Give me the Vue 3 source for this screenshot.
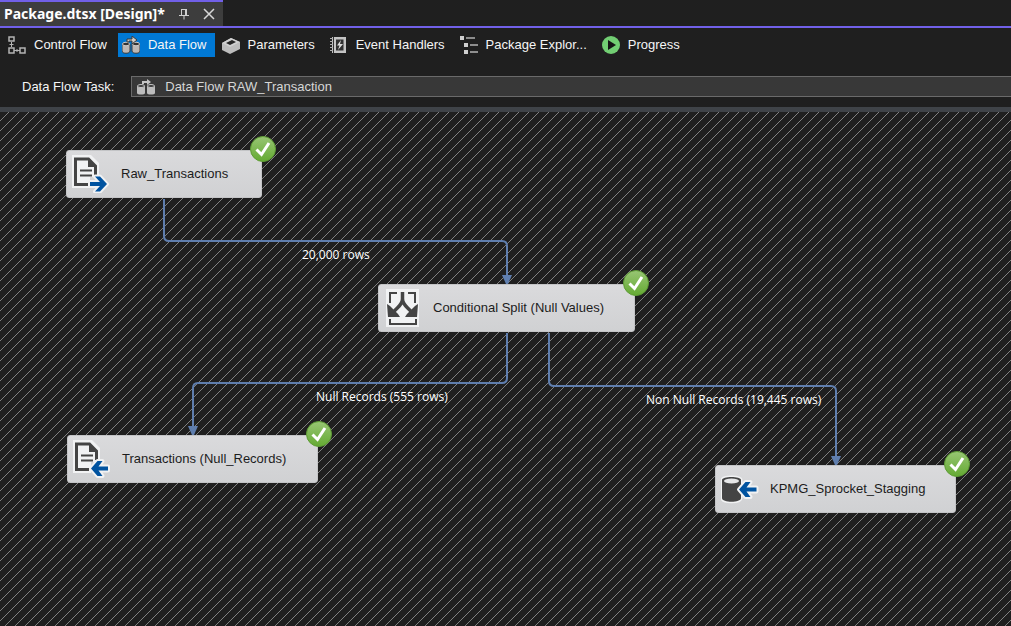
<script setup>
const views = [
  { id: 'control', label: 'Control Flow' },
  { id: 'data', label: 'Data Flow' },
  { id: 'params', label: 'Parameters' },
  { id: 'events', label: 'Event Handlers' },
  { id: 'explorer', label: 'Package Explor...' },
  { id: 'progress', label: 'Progress' },
]
const active = 'data'

const nodes = [
  { id: 'raw', label: 'Raw_Transactions', kind: 'source', x: 66, y: 38, w: 196 },
  { id: 'split', label: 'Conditional Split (Null Values)', kind: 'split', x: 378, y: 172, w: 257 },
  { id: 'nulls', label: 'Transactions (Null_Records)', kind: 'target', x: 67, y: 323, w: 251 },
  { id: 'stage', label: 'KPMG_Sprocket_Stagging', kind: 'database', x: 715, y: 353, w: 241 },
]

const edges = [
  { d: 'M164 87V124Q164 129 169 129H502Q507 129 507 134V164', x: 507, y: 172 },
  { d: 'M507 221V266Q507 271 502 271H198Q193 271 193 276V315', x: 193, y: 323 },
  { d: 'M549 221V269Q549 274 554 274H831Q836 274 836 279V345', x: 836, y: 353 },
]

const counts = [
  { text: '20,000 rows', x: 302, y: 134 },
  { text: 'Null Records (555 rows)', x: 316, y: 276 },
  { text: 'Non Null Records (19,445 rows)', x: 646, y: 279 },
]

const stripe = Array.from({ length: 10 }, (_, i) => ({ x: i, y: (18 - i) % 10 }))
const place = (o) => ({ left: o.x + 'px', top: o.y + 'px', width: o.w ? o.w + 'px' : null })
</script>

<template>
  <div class="designer">
    <header class="files">
      <div class="file">
        <span class="file-name">Package.dtsx [Design]*</span>
        <button class="mini" aria-label="Pin">
          <svg width="10" height="12" viewBox="0 0 10 12" fill="none" stroke="#d0d0d0">
            <path d="M2.500 1v6M2 1.500h6M0 7.500h10M5 8v3.500" />
            <path d="M7 1v6" stroke-width="2" />
          </svg>
        </button>
        <button class="mini" aria-label="Close">
          <svg width="12" height="12" viewBox="0 0 12 12" fill="none" stroke="#d8d8d8" stroke-width="1.500">
            <path d="M1 1l10 10M11 1L1 11" />
          </svg>
        </button>
      </div>
    </header>

    <nav class="views">
      <button v-for="v in views" :key="v.id" class="view" :class="{ active: v.id === active }">
        <svg v-if="v.id === 'control'" class="icon" viewBox="0 0 18 18" fill="none" stroke="#b4b4b4">
          <rect x="1" y="1" width="5" height="4" stroke-width="1.500" />
          <rect x="1" y="12" width="5" height="5" stroke-width="1.500" />
          <rect x="12" y="12" width="5" height="5" stroke-width="1.500" />
          <path d="M3.500 6v5M1.500 8.500h4M6 14.500h6M9 13v3" />
        </svg>
        <svg v-else-if="v.id === 'data'" class="icon" viewBox="0 0 18 18">
          <path d="M0 8v7c0 3 8 3 8 0V8zM10 8v7c0 3 8 3 8 0V8z" fill="#bdb8b5" stroke="#3a3a3a" />
          <ellipse cx="4" cy="8" rx="3.500" ry="1.800" fill="#333" stroke="#d3cfcb" />
          <ellipse cx="14" cy="8" rx="3.500" ry="1.800" fill="#333" stroke="#d3cfcb" />
          <path d="M5 6V3h5V0l5 4-5 4V5H7v1z" fill="#d0cbc5" stroke="#3a3a3a" />
        </svg>
        <svg v-else-if="v.id === 'params'" class="icon" viewBox="0 0 18 18">
          <path d="M0 7l9-5 9 4v7l-10 5-8-4z" fill="#bdbdbd" />
          <path d="M0 7l9-5 9 4-10 5z" fill="#d0d0d0" />
          <path d="M4 7l6-3 4 2-6 3z" fill="#252525" />
        </svg>
        <svg v-else-if="v.id === 'events'" class="icon" viewBox="0 0 18 18">
          <rect x="2" y="1" width="14" height="16" fill="#c4c4c4" />
          <rect x="6" y="3.500" width="7.500" height="11" fill="#303030" />
          <path d="M11 4L7 9.500h2.500L8 14l5-6h-3z" fill="#ddd" />
          <path d="M0 2.500h3M0 5.500h3M0 8.500h3M0 11.500h3M0 14.500h3" stroke="#aaa" />
          <path d="M3.500 1v16" stroke="#303030" />
        </svg>
        <svg v-else-if="v.id === 'explorer'" class="icon" viewBox="0 0 18 18">
          <path d="M0 0h4v4H0zM4 7h4v4H4zM4 14h4v4H4z" fill="#cfcfcf" />
          <path d="M6 2h9" stroke="#8c8c8c" stroke-width="2" />
          <path d="M10 9h8M10 16h8" stroke="#b4b4b4" stroke-width="1.500" />
        </svg>
        <svg v-else class="icon" viewBox="0 0 18 18">
          <circle cx="9" cy="9" r="9" fill="#72ce73" />
          <path d="M6 4l8 5-8 5z" fill="#151515" />
        </svg>
        <span>{{ v.label }}</span>
      </button>
    </nav>

    <div class="task">
      <span>Data Flow Task:</span>
      <button class="picker" aria-label="Data Flow Task">
        <svg class="icon" viewBox="0 0 18 18">
          <path d="M0 8v7c0 2 8 2 8 0V8zM10 8v7c0 2 8 2 8 0V8z" fill="#bcbcbc" />
          <ellipse cx="4" cy="8" rx="3.500" ry="1.500" fill="#383838" stroke="#c8c8c8" />
          <ellipse cx="14" cy="8" rx="3.500" ry="1.500" fill="#383838" stroke="#c8c8c8" />
          <path d="M5 6V3h5V1l4 3-4 3V5H7v1z" fill="#c4c4c4" />
        </svg>
        <span>Data Flow RAW_Transaction</span>
      </button>
    </div>

    <main class="canvas">
      <svg class="lines" width="100%" height="100%">
        <defs>
          <pattern id="hatch" width="10" height="10" patternUnits="userSpaceOnUse">
            <rect v-for="s in stripe" :key="s.x" :x="s.x" :y="s.y" width="1" height="1" fill="#808080" shape-rendering="crispEdges" />
          </pattern>
        </defs>
        <rect width="100%" height="100%" fill="url(#hatch)" />
        <g v-for="e in edges" :key="e.d">
          <path :d="e.d" fill="none" stroke="#5f7eae" stroke-width="2" />
          <path :d="`M${e.x - 5} ${e.y - 9}h10l-4 9h-2z`" fill="#5f7eae" />
        </g>
      </svg>

      <span v-for="c in counts" :key="c.text" class="count" :style="place(c)">{{ c.text }}</span>

      <article v-for="n in nodes" :key="n.id" class="node" :style="place(n)">
        <svg class="glyph" width="38" height="38" viewBox="0 0 38 38">
          <g v-if="n.kind === 'source' || n.kind === 'target'">
            <path d="M0 0h19l8 8v14H18v11H0z" fill="#f1f2f3" />
            <path d="M16 29.500H3.500V4h13l7 7v9" fill="none" stroke="#444" stroke-width="3" />
            <path d="M16 3l9 9h-9z" fill="#444" />
            <path d="M8 15.500h12M8 20.500h12" stroke="#444" stroke-width="2" />
            <path
              :d="n.kind === 'source'
                ? 'M18 27h10l-5-5.500h5l7 7.500-7 7.500h-5l5-5.500H18z'
                : 'M35 26.500H25.500l4-5.500h-5L18 28.500l6.500 7.500h5l-4-5.500H35z'"
              fill="#0053a0" stroke="#f1f2f3" stroke-width="4" stroke-linejoin="round" paint-order="stroke"
            />
          </g>
          <g v-else-if="n.kind === 'split'">
            <path d="M2 0h33v38H2z" fill="#f1f2f3" />
            <path d="M13 4H6v10M24 4h7v10M6 30v5h26v-5" fill="none" stroke="#444" stroke-width="2" />
            <path d="M18.500 3v7c0 6-5 8-9 13M18.500 10c0 6 5 8 9 13" fill="none" stroke="#444" stroke-width="3.500" />
            <path d="M3 15l3 2 8 8 2 3H4zM34 15l-3 2-8 8-2 3h12z" fill="#444" />
          </g>
          <g v-else>
            <path
              d="M1 10v18c0 5 19 5 19 0V10c0-4-19-4-19 0z"
              fill="#444" stroke="#f1f2f3" stroke-width="3" paint-order="stroke"
            />
            <ellipse cx="10.500" cy="11" rx="7.500" ry="2.500" fill="#e6e7e8" />
            <path
              d="M35.500 17.500H25.500l4-5.500h-5L18 19.500l6.500 7.500h5l-4-5.500h10z"
              fill="#0053a0" stroke="#f1f2f3" stroke-width="4" stroke-linejoin="round" paint-order="stroke"
            />
          </g>
        </svg>
        <span>{{ n.label }}</span>
        <svg class="badge" width="26" height="26" viewBox="0 0 26 26" role="img" aria-label="Succeeded">
          <defs>
            <linearGradient :id="'ok-' + n.id" x1="0" y1="0" x2="0" y2="1">
              <stop offset="0" stop-color="#98c574" />
              <stop offset="1" stop-color="#64aa32" />
            </linearGradient>
          </defs>
          <circle cx="13" cy="13" r="12.500" :fill="`url(#ok-${n.id})`" stroke="#5d9b34" />
          <path d="M6.500 13.500l5 5L19 7" fill="none" stroke="#fff" stroke-width="3" />
        </svg>
      </article>
    </main>
  </div>
</template>

<style>
body {
  margin: 0;
  background: #1f1f1f;
}
</style>

<style scoped>
.designer {
  display: flex;
  flex-direction: column;
  min-height: 100vh;
  overflow: hidden;
  background: #1f1f1f;
  color: #f5f5f5;
  font: 13px/16px "Liberation Sans", Arial, sans-serif;
}
button {
  padding: 0;
  border: 0;
  background: none;
  color: inherit;
  font: inherit;
}
svg {
  display: block;
  flex: none;
}
.files {
  display: flex;
  border-bottom: 2px solid #7160e8;
}
.file {
  display: flex;
  align-items: center;
  gap: 14px;
  height: 24px;
  padding: 0 8px 0 4px;
  border-top: 2px solid #7160e8;
  background: #3d3d3d;
}
.file-name {
  color: #fff;
  font: bold 14px/20px "Noto Sans", sans-serif;
}
.views {
  display: flex;
  gap: 3px;
  padding: 5px 4px 0;
}
.view {
  display: flex;
  align-items: center;
  gap: 8px;
  height: 24px;
  padding: 0 8px 0 4px;
  white-space: nowrap;
}
.view.active {
  background: #0078d4;
}
.icon {
  width: 18px;
  height: 18px;
}
.task {
  display: flex;
  align-items: center;
  gap: 17px;
  padding: 19px 0 10px 22px;
  border-bottom: 5px solid #3f4348;
}
.picker {
  display: flex;
  flex: 1;
  align-items: center;
  gap: 10px;
  height: 21px;
  padding: 0 5px;
  border: 1px solid #6a6a6a;
  border-right: 0;
  background: #383838;
  color: #d6d6d6;
}
.canvas {
  position: relative;
  flex: 1;
  min-height: 420px;
}
.lines {
  position: absolute;
  inset: 0;
}
.count {
  position: absolute;
  color: #fff;
  font: 500 12px/17px "Open Sans", sans-serif;
  white-space: nowrap;
}
.node {
  position: absolute;
  display: flex;
  box-sizing: border-box;
  align-items: center;
  gap: 11px;
  height: 48px;
  padding: 0 5px;
  border: 1px solid #c3c4c6;
  border-radius: 3px;
  background: linear-gradient(#dadadc, #d0d1d3);
  color: #1c1c1c;
  font-size: 13px;
  white-space: nowrap;
}
.badge {
  position: absolute;
  top: -15px;
  right: -15px;
}
</style>
